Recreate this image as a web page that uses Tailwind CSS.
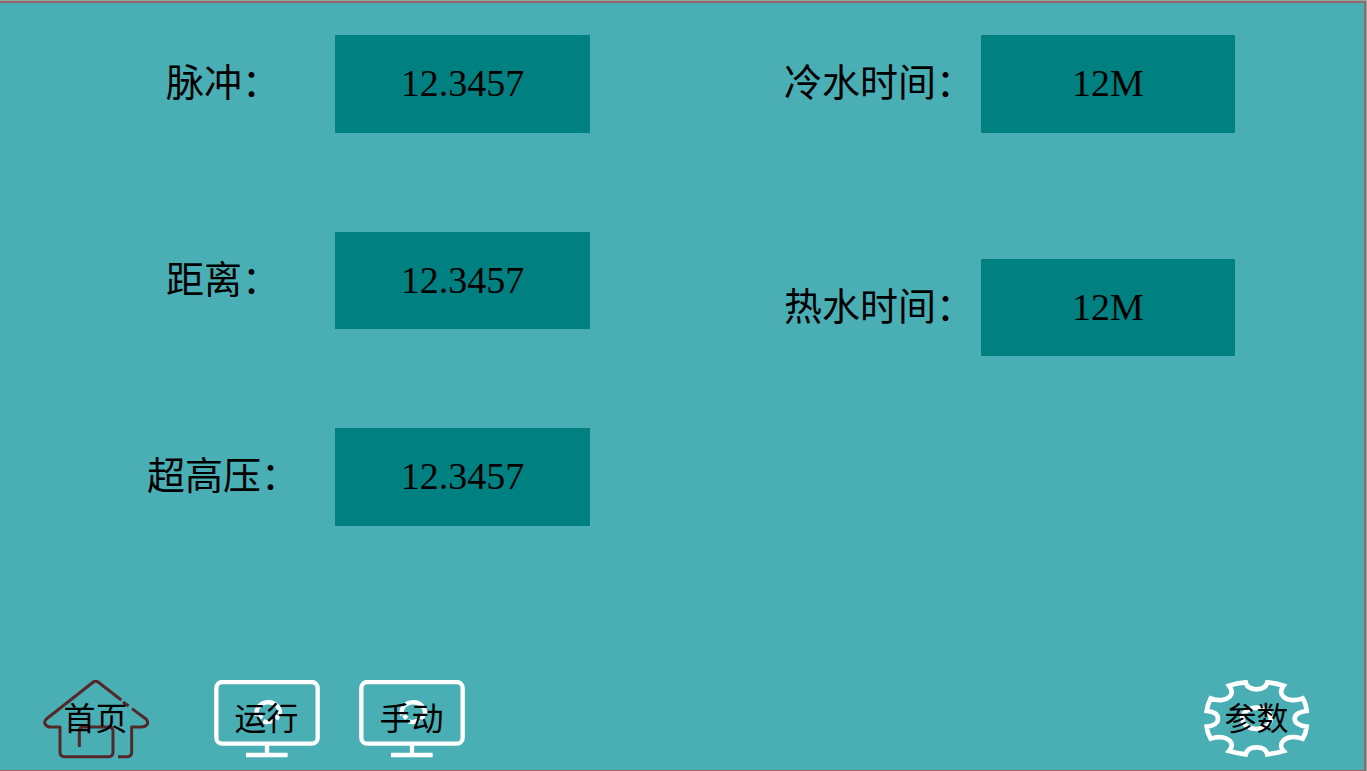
<!DOCTYPE html>
<html lang="zh-CN">
<head>
<meta charset="utf-8">
<meta name="viewport" content="width=device-width, initial-scale=1">
<title>参数</title>
<script src="https://cdn.jsdelivr.net/npm/@tailwindcss/browser@4"></script>
</head>
<body class="bg-[#8fa99b] pt-px pr-px text-black font-['Liberation_Serif','Noto_Sans_CJK_SC',serif]">
<div class="flex min-h-[calc(100vh-1px)] flex-col border-t-2 border-r-2 border-b border-t-[#94666e] border-r-[#94666e] border-b-[#a85f66] bg-[#4aafb5]">
  <main class="flex flex-1 items-start justify-between pt-8 pr-[129px] pl-[111px] text-[38px] leading-10">
    <section class="flex flex-col gap-[99px]">
      <div class="flex items-center">
        <label for="pulse" class="w-[224px] pb-0.5 text-center">脉冲：</label>
        <input id="pulse" value="12.3457" class="h-[98px] w-[255px] bg-[#008080] pb-0.5 text-center">
      </div>
      <div class="flex items-center">
        <label for="distance" class="w-[224px] pb-0.5 text-center">距离：</label>
        <input id="distance" value="12.3457" class="h-[97px] w-[255px] bg-[#008080] pb-0.5 text-center">
      </div>
      <div class="flex items-center">
        <label for="pressure" class="w-[224px] pb-0.5 text-center">超高压：</label>
        <input id="pressure" value="12.3457" class="h-[98px] w-[255px] bg-[#008080] pb-0.5 text-center">
      </div>
    </section>
    <section class="flex flex-col gap-[126px]">
      <div class="flex items-center">
        <label for="cold" class="w-[204px] pb-0.5 text-center">冷水时间：</label>
        <input id="cold" value="12M" class="h-[98px] w-[254px] bg-[#008080] pb-0.5 text-center">
      </div>
      <div class="flex items-center">
        <label for="hot" class="w-[204px] pb-0.5 text-center">热水时间：</label>
        <input id="hot" value="12M" class="h-[97px] w-[254px] bg-[#008080] pb-0.5 text-center">
      </div>
    </section>
  </main>
  <nav class="flex items-center pr-[54px] pb-[10px] pl-[42px] text-[32px] leading-8">
    <button type="button" class="mr-16 grid h-20 w-[107px] place-items-center">
      <svg class="col-start-1 row-start-1 h-20 w-[107px]" viewBox="36 30 321 240" fill="none" stroke="#542829" stroke-width="9" stroke-linejoin="round" aria-hidden="true">
        <path d="M274 90L204 36Q197 31 190 36L49 147Q41 155 46 163Q51 171 62 171H90V247Q90 260 103 260H236Q249 260 249 247V184Q249 171 236 171H160Q148 171 148 183V231"/>
        <path d="M279 96L296 108"/>
        <path d="M306 116L348 147Q357 157 350 165Q345 171 334 171H305V247Q305 260 292 260H264"/>
      </svg>
      <span class="col-start-1 row-start-1 pb-0.5">首页</span>
    </button>
    <button type="button" class="mr-[38px] grid h-20 w-[107px] place-items-center">
      <svg class="col-start-1 row-start-1 h-20 w-[107px]" viewBox="39 30 321 240" fill="none" stroke="#fff" stroke-width="13" aria-hidden="true">
        <rect x="49" y="36" width="304" height="185" rx="18"/>
        <path d="M201 222V254M138 255H263"/>
        <path d="M171 136A35 31 0 1 1 239 134M238 145L222 138M176 145L186 136M190 154Q206 160 221 150" stroke-width="13"/>
      </svg>
      <span class="col-start-1 row-start-1 pb-0.5">运行</span>
    </button>
    <button type="button" class="grid h-20 w-[107px] place-items-center">
      <svg class="col-start-1 row-start-1 h-20 w-[107px]" viewBox="39 30 321 240" fill="none" stroke="#fff" stroke-width="13" aria-hidden="true">
        <rect x="49" y="36" width="304" height="185" rx="18"/>
        <path d="M201 222V254M138 255H263"/>
        <path d="M171 136A35 31 0 1 1 239 134M238 145L222 138M176 145L186 136M190 154Q206 160 221 150" stroke-width="13"/>
      </svg>
      <span class="col-start-1 row-start-1 pb-0.5">手动</span>
    </button>
    <button type="button" class="ml-auto grid h-20 w-[107px] place-items-center">
      <svg class="col-start-1 row-start-1 h-20 w-[107px]" viewBox="39 30 321 240" fill="none" stroke="#fff" stroke-width="14" aria-hidden="true">
        <path d="M167 37C170 51 182 58 200 58S229 51 232 37Q258 39 281 47C271 60 270 70 280 80S312 95 338 85Q347 98 350 123C328 125 314 134 314 146S328 168 350 170Q348 190 338 206C312 197 290 201 280 212S271 232 281 243Q257 250 232 253C229 239 218 232 200 232S170 239 167 253Q141 250 117 243C127 232 129 222 119 212S88 197 62 206Q52 189 50 170C72 168 84 158 84 146S72 125 50 123Q53 102 62 85C88 95 109 90 119 80S127 60 117 47Q140 39 167 37Z"/>
        <ellipse cx="200" cy="145" rx="43" ry="32"/>
      </svg>
      <span class="col-start-1 row-start-1 pb-0.5">参数</span>
    </button>
  </nav>
</div>
</body>
</html>
